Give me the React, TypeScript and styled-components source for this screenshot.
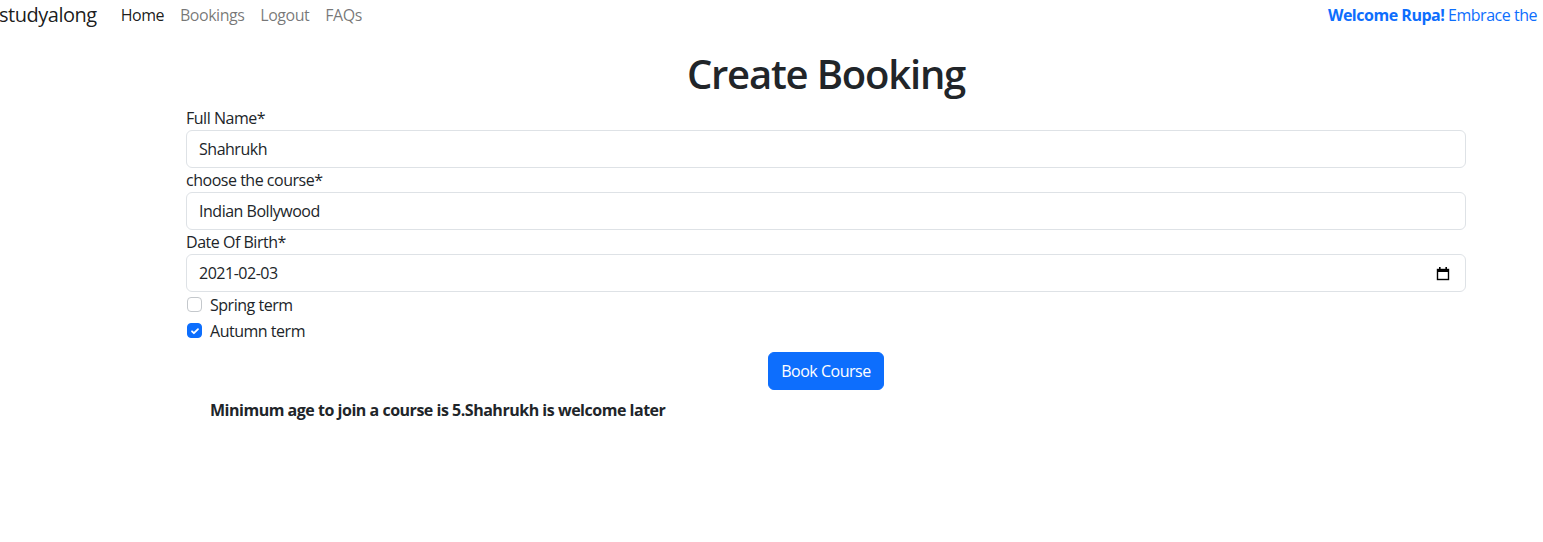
import React from "react";
import styled, { createGlobalStyle } from "styled-components";

const FONT = `"Segoe UI", "Open Sans", "Noto Sans", sans-serif`;

const Global = createGlobalStyle`
  html, body { margin: 0; padding: 0; background: #fff; overflow: hidden; }
  body { font-family: ${FONT}; font-size: 16px; line-height: 1.5; color: #212529; letter-spacing: -0.03em; }
  * { box-sizing: border-box; }
`;

const Page = styled.div`
  width: 1543px;
  height: 542px;
  overflow: hidden;
`;

const Navbar = styled.nav`
  display: flex;
  align-items: center;
  height: 30px;
  white-space: nowrap;
`;

const Brand = styled.a`
  font-size: 20px;
  line-height: 30px;
  color: rgba(0, 0, 0, 0.9);
  margin-left: -1px;
  margin-right: 16px;
  text-decoration: none;
`;

const NavLinks = styled.div`
  display: flex;
  flex: 1;
`;

const NavLink = styled.a<{ $active?: boolean }>`
  padding: 0 8px;
  line-height: 30px;
  text-decoration: none;
  color: ${(p) => (p.$active ? "rgba(0,0,0,0.9)" : "rgba(0,0,0,0.55)")};
`;

const Welcome = styled.div`
  color: #0d6efd;
  line-height: 30px;
  padding-right: 6px;
  white-space: nowrap;
  b { font-weight: 700; }
`;

const Main = styled.main`
  margin-left: 186px;
  width: 1280px;
  display: flex;
  flex-direction: column;
`;

const Title = styled.h1`
  margin: 20px 0 8px;
  font-size: 40px;
  font-weight: 600;
  line-height: 48px;
  letter-spacing: -0.03em;
  text-align: center;
`;

const Label = styled.label`
  display: block;
  line-height: 24px;
`;

const Input = styled.input`
  display: block;
  width: 100%;
  height: 38px;
  padding: 6px 12px;
  font: inherit;
  letter-spacing: inherit;
  color: #212529;
  border: 1px solid #dee2e6;
  border-radius: 6px;
  background: #fff;
  outline: none;
`;

const DateField = styled.div`
  display: flex;
  align-items: center;
  justify-content: space-between;
  height: 38px;
  padding: 6px 15px 6px 12px;
  border: 1px solid #dee2e6;
  border-radius: 6px;
`;

const Check = styled.label`
  display: flex;
  align-items: center;
  gap: 8px;
  height: 26px;
  padding-left: 1px;
`;

const Box = styled.span<{ $checked?: boolean }>`
  width: 15px;
  height: 15px;
  margin-top: -1px;
  border-radius: 4px;
  border: 1px solid ${(p) => (p.$checked ? "#0d6efd" : "#c4c8cc")};
  background: ${(p) => (p.$checked ? "#0d6efd" : "#fff")};
  display: flex;
  align-items: center;
  justify-content: center;
`;

const ButtonRow = styled.div`
  display: flex;
  justify-content: center;
  margin-top: 8px;
`;

const Button = styled.button`
  font: inherit;
  letter-spacing: inherit;
  color: #fff;
  background: #0d6efd;
  border: 1px solid #0d6efd;
  border-radius: 6px;
  height: 38px;
  padding: 0 12px;
  cursor: pointer;
`;

const Message = styled.p`
  margin: 8px 0 0 24px;
  font-weight: 700;
  line-height: 24px;
`;

const CalendarIcon = () => (
  <svg width="14" height="15" viewBox="0 0 14 15" aria-hidden>
    <rect x="1.5" y="3.5" width="11" height="10" fill="none" stroke="#000" strokeWidth="1.4" />
    <rect x="1" y="3" width="12" height="3" fill="#000" />
    <rect x="3" y="1" width="1.6" height="3" fill="#000" />
    <rect x="9.4" y="1" width="1.6" height="3" fill="#000" />
  </svg>
);

const Tick = () => (
  <svg width="12" height="12" viewBox="0 0 20 20" aria-hidden>
    <path d="M5 10.5l3.2 3.2L15 7" fill="none" stroke="#fff" strokeWidth="3" strokeLinecap="round" strokeLinejoin="round" />
  </svg>
);

export default function App() {
  return (
    <Page>
      <Global />
      <Navbar>
        <Brand href="#">studyalong</Brand>
        <NavLinks>
          <NavLink $active href="#">Home</NavLink>
          <NavLink href="#">Bookings</NavLink>
          <NavLink href="#">Logout</NavLink>
          <NavLink href="#">FAQs</NavLink>
        </NavLinks>
        <Welcome>
          <b>Welcome Rupa!</b> Embrace the
        </Welcome>
      </Navbar>
      <Main>
        <Title>Create Booking</Title>
        <Label>Full Name*</Label>
        <Input readOnly value="Shahrukh" />
        <Label>choose the course*</Label>
        <Input readOnly value="Indian Bollywood" />
        <Label>Date Of Birth*</Label>
        <DateField>
          <span>2021-02-03</span>
          <CalendarIcon />
        </DateField>
        <Check>
          <Box />
          Spring term
        </Check>
        <Check>
          <Box $checked>
            <Tick />
          </Box>
          Autumn term
        </Check>
        <ButtonRow>
          <Button>Book Course</Button>
        </ButtonRow>
        <Message>Minimum age to join a course is 5.Shahrukh is welcome later</Message>
      </Main>
    </Page>
  );
}
